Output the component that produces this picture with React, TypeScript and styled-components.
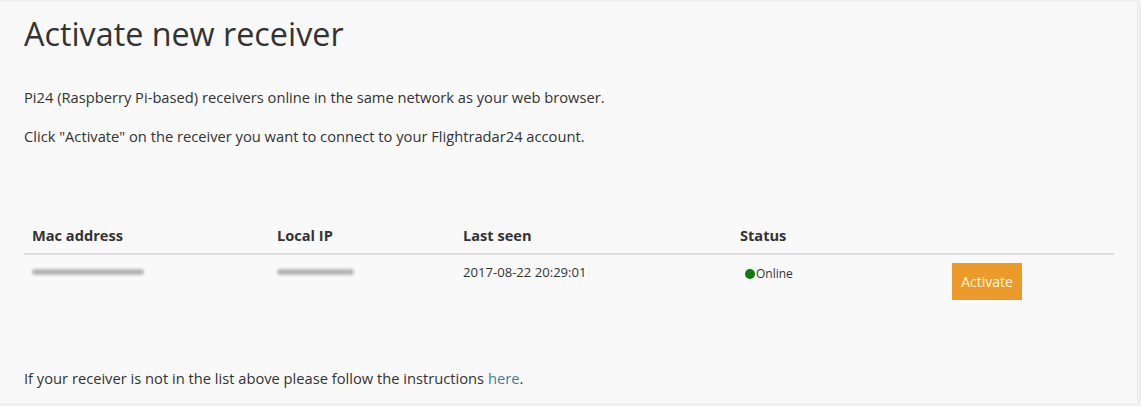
import React, { ReactElement } from 'react'
import styled, { createGlobalStyle } from 'styled-components'

const GlobalStyle = createGlobalStyle`
  html, body {
    margin: 0;
    padding: 0;
    background: #eef0f2;
  }
  body {
    font-family: 'Open Sans', 'Liberation Sans', sans-serif;
    color: #333;
  }
`

const Panel = styled.div`
  box-sizing: border-box;
  width: 1138px;
  height: 401px;
  margin-top: 2px;
  padding: 11px 24px 0 24px;
  background: #f9f9f9;
  border-right: 1px solid #ececec;
`

const Title = styled.h1`
  margin: 0;
  font-size: 32.3px;
  line-height: 40px;
  font-weight: 400;
  color: #333;
`

const Text = styled.p<{ $gap: number }>`
  margin: ${p => p.$gap}px 0 0 0;
  font-size: 14.7px;
  line-height: 20px;
  color: #333;
`

const Link = styled.a`
  color: #3f7f9c;
  text-decoration: none;
`

const Table = styled.table`
  width: 1090px;
  margin-top: 71px;
  border-collapse: collapse;
  table-layout: fixed;
`

const Head = styled.th<{ $w: number }>`
  box-sizing: border-box;
  width: ${p => p.$w}px;
  padding: 8px;
  text-align: left;
  font-size: 14.6px;
  line-height: 20px;
  font-weight: 700;
  color: #333;
  border-bottom: 2px solid #dddddd;
`

const Cell = styled.td`
  padding: 8px;
  vertical-align: top;
  font-size: 13.1px;
  line-height: 18px;
  color: #333;
`

const Blurred = styled.div<{ $w: number }>`
  width: ${p => p.$w}px;
  height: 6px;
  margin-top: 6px;
  background: #a9a9a9;
  border-radius: 3px;
  filter: blur(1.6px);
  opacity: 0.85;
`

const Status = styled.span`
  display: inline-flex;
  align-items: center;
  font-size: 12px;
  line-height: 18px;
  margin-top: 2px;
`

const Dot = styled.span`
  display: inline-block;
  width: 10px;
  height: 10px;
  border-radius: 50%;
  background: #0a7d0a;
  margin: 0 1px 0 5px;
`

const Button = styled.button`
  width: 70px;
  height: 37px;
  padding: 0;
  border: none;
  background: #ec9b2b;
  color: #fff5dc;
  font-family: 'Open Sans', 'Liberation Sans', sans-serif;
  font-size: 14px;
  cursor: pointer;
`

export default function App(): ReactElement {
  return (
    <>
      <GlobalStyle />
      <Panel>
        <Title>Activate new receiver</Title>
        <Text $gap={34}>Pi24 (Raspberry Pi-based) receivers online in the same network as your web browser.</Text>
        <Text $gap={19}>Click "Activate" on the receiver you want to connect to your Flightradar24 account.</Text>
        <Table>
          <thead>
            <tr>
              <Head $w={245}>Mac address</Head>
              <Head $w={186}>Local IP</Head>
              <Head $w={277}>Last seen</Head>
              <Head $w={212}>Status</Head>
              <Head $w={170}></Head>
            </tr>
          </thead>
          <tbody>
            <tr>
              <Cell><Blurred $w={112} /></Cell>
              <Cell><Blurred $w={77} /></Cell>
              <Cell>2017-08-22 20:29:01</Cell>
              <Cell>
                <Status><Dot />Online</Status>
              </Cell>
              <Cell><Button>Activate</Button></Cell>
            </tr>
          </tbody>
        </Table>
        <Text $gap={60}>
          If your receiver is not in the list above please follow the instructions <Link href="#">here</Link>.
        </Text>
      </Panel>
    </>
  )
}
